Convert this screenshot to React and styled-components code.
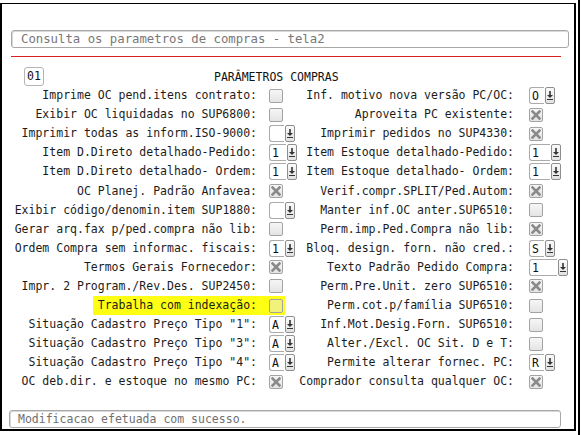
import React from 'react'
import styled, { createGlobalStyle } from 'styled-components'

const GlobalStyle = createGlobalStyle`
  html, body {
    margin: 0;
    padding: 0;
    background: #fff;
  }
  body {
    font-family: "DejaVu Sans Mono", "Liberation Mono", monospace;
  }
`

const Page = styled.div`
  width: 581px;
  height: 435px;
  position: relative;
  box-sizing: border-box;
  padding-top: 3px;
  border-right: 2px solid #000;
  width: 580px;
`

const Frame = styled.div`
  box-sizing: border-box;
  width: 576px;
  height: 428px;
  border-top: 1px solid #000;
  border-left: 2px solid #000;
  border-right: 2px solid #000;
  border-bottom: 2px solid #000;
  display: flex;
  flex-direction: column;
  padding: 26px 0 0 9px;
`

const TitleInput = styled.div`
  box-sizing: border-box;
  width: 558px;
  height: 18px;
  border: 1px solid #a8a8a8;
  border-radius: 3px;
  box-shadow: inset 1px 1px 0 #d8d8d8;
  color: #777;
  font-size: 12.3px;
  line-height: 16px;
  padding-left: 9px;
  white-space: nowrap;
`

const RedLine = styled.div`
  width: 550px;
  height: 1px;
  background: #d92020;
  margin-top: 8px;
`

const Header = styled.div`
  display: flex;
  align-items: center;
  height: 19px;
  margin-top: 10px;
  padding-left: 13px;
`

const CodeBox = styled.div`
  box-sizing: border-box;
  width: 20px;
  height: 19px;
  border: 1px solid #b4b4b4;
  border-radius: 3px;
  font-size: 11.5px;
  line-height: 17px;
  text-align: center;
  color: #111;
`

const Title = styled.div`
  font-size: 11.5px;
  color: #111;
  margin-left: 170px;
`

const Grid = styled.div`
  display: grid;
  grid-template-columns: 246px 40px 217px 1fr;
  grid-auto-rows: 19.1px;
  margin-top: 0px;
`

const Label = styled.div`
  text-align: right;
  white-space: nowrap;
  font-size: 11.5px;
  color: #1c1c1c;
  line-height: 19px;
  align-self: center;
  height: 19px;
  background: ${p => (p.$mark ? '#ffff14' : 'transparent')};
  justify-self: ${p => (p.$mark ? 'end' : 'stretch')};
  padding-left: ${p => (p.$mark ? '5px' : '0')};
`

const Cell = styled.div`
  display: flex;
  align-items: center;
  padding-left: ${p => p.$pad}px;
  background: ${p => (p.$mark ? 'linear-gradient(to right, #ffff14 0 28px, transparent 28px)' : 'transparent')};
`

const Box = styled.div`
  box-sizing: border-box;
  width: 14px;
  height: 14px;
  border: 1px solid #a3a3a3;
  border-radius: 2px;
  background: ${p => (p.$mark ? '#f2f27a' : 'linear-gradient(#f6f6f6, #e4e4e4)')};
  display: flex;
  align-items: center;
  justify-content: center;
`

const Field = styled.div`
  box-sizing: border-box;
  width: ${p => p.$w}px;
  height: 17px;
  border: 1px solid #ababab;
  border-right: none;
  border-radius: 3px 0 0 3px;
  background: #fff;
  font-size: 11.5px;
  line-height: 16px;
  padding-left: 2px;
  color: #111;
`

const ArrowBtn = styled.div`
  box-sizing: border-box;
  width: 10px;
  height: 17px;
  border: 1px solid #8e8e8e;
  border-radius: 2px;
  background: linear-gradient(#fafafa, #e2e2e2);
  display: flex;
  align-items: center;
  justify-content: center;
  margin-left: 1px;
`

const StatusBar = styled.div`
  box-sizing: border-box;
  width: 552px;
  height: 18px;
  margin-top: auto;
  margin-bottom: 1px;
  margin-left: -2px;
  border: 1px solid #a8a8a8;
  border-radius: 3px;
  box-shadow: inset 1px 1px 0 #d8d8d8;
  color: #6f6f6f;
  font-size: 11.5px;
  line-height: 16px;
  padding-left: 8px;
`

const Check = ({ on, mark }) => (
  <Box $mark={mark}>
    {on && (
      <svg width="10" height="10" viewBox="0 0 10 10">
        <path d="M1.5 1.5 L8.5 8.5 M8.5 1.5 L1.5 8.5" stroke="#8a8a8a" strokeWidth="2.6" strokeLinecap="square" />
      </svg>
    )}
  </Box>
)

const Select = ({ value, w = 15 }) => (
  <>
    <Field $w={w}>{value}</Field>
    <ArrowBtn>
      <svg width="8" height="11" viewBox="0 0 8 11">
        <path d="M4 1 V6" stroke="#333" strokeWidth="1.6" />
        <path d="M1 5 L4 8 L7 5 Z" fill="#333" />
        <path d="M1 9.5 H7" stroke="#333" strokeWidth="1" />
      </svg>
    </ArrowBtn>
  </>
)

const rows = [
  [['Imprime OC pend.itens contrato:', { t: 'c' }], ['Inf. motivo nova versão PC/OC:', { t: 's', v: 'O' }]],
  [['Exibir OC liquidadas no SUP6800:', { t: 'c' }], ['Aproveita PC existente:', { t: 'c', on: true }]],
  [['Imprimir todas as inform.ISO-9000:', { t: 's', v: '' }], ['Imprimir pedidos no SUP4330:', { t: 'c', on: true }]],
  [['Item D.Direto detalhado-Pedido:', { t: 's', v: '1', w: 22 }], ['Item Estoque detalhado-Pedido:', { t: 's', v: '1', w: 21 }]],
  [['Item D.Direto detalhado- Ordem:', { t: 's', v: '1', w: 22 }], ['Item Estoque detalhado- Ordem:', { t: 's', v: '1', w: 21 }]],
  [['OC Planej. Padrão Anfavea:', { t: 'c', on: true }], ['Verif.compr.SPLIT/Ped.Autom:', { t: 'c', on: true }]],
  [['Exibir código/denomin.item SUP1880:', { t: 's', v: '' }], ['Manter inf.OC anter.SUP6510:', { t: 'c' }]],
  [['Gerar arq.fax p/ped.compra não lib:', { t: 'c' }], ['Perm.imp.Ped.Compra não lib:', { t: 'c', on: true }]],
  [['Ordem Compra sem informac. fiscais:', { t: 's', v: '1', w: 15 }], ['Bloq. design. forn. não cred.:', { t: 's', v: 'S' }]],
  [['Termos Gerais Fornecedor:', { t: 'c', on: true }], ['Texto Padrão Pedido Compra:', { t: 's', v: '1', w: 28 }]],
  [['Impr. 2 Program./Rev.Des. SUP2450:', { t: 'c' }], ['Perm.Pre.Unit. zero SUP6510:', { t: 'c', on: true }]],
  [['Trabalha com indexação:', { t: 'c', mark: true }], ['Perm.cot.p/família SUP6510:', { t: 'c' }]],
  [['Situação Cadastro Preço Tipo "1":', { t: 's', v: 'A' }], ['Inf.Mot.Desig.Forn. SUP6510:', { t: 'c' }]],
  [['Situação Cadastro Preço Tipo "3":', { t: 's', v: 'A' }], ['Alter./Excl. OC Sit. D e T:', { t: 'c' }]],
  [['Situação Cadastro Preço Tipo "4":', { t: 's', v: 'A' }], ['Permite alterar fornec. PC:', { t: 's', v: 'R' }]],
  [['OC deb.dir. e estoque no mesmo PC:', { t: 'c', on: true }], ['Comprador consulta qualquer OC:', { t: 'c', on: true }]],
]

const Control = ({ c }) =>
  c.t === 'c' ? <Check on={c.on} mark={c.mark} /> : <Select value={c.v} w={c.w} />

export default function App() {
  return (
    <>
      <GlobalStyle />
      <Page>
        <Frame>
          <TitleInput>Consulta os parametros de compras - tela2</TitleInput>
          <RedLine />
          <Header>
            <CodeBox>01</CodeBox>
            <Title>PARÂMETROS COMPRAS</Title>
          </Header>
          <Grid>
            {rows.map(([left, right], i) => (
              <React.Fragment key={i}>
                <Label $mark={left[1].mark}>{left[0]}</Label>
                <Cell $pad={12} $mark={left[1].mark}>
                  <Control c={left[1]} />
                </Cell>
                <Label>{right[0]}</Label>
                <Cell $pad={15}>
                  <Control c={right[1]} />
                </Cell>
              </React.Fragment>
            ))}
          </Grid>
          <StatusBar>Modificacao efetuada com sucesso.</StatusBar>
        </Frame>
      </Page>
    </>
  )
}
